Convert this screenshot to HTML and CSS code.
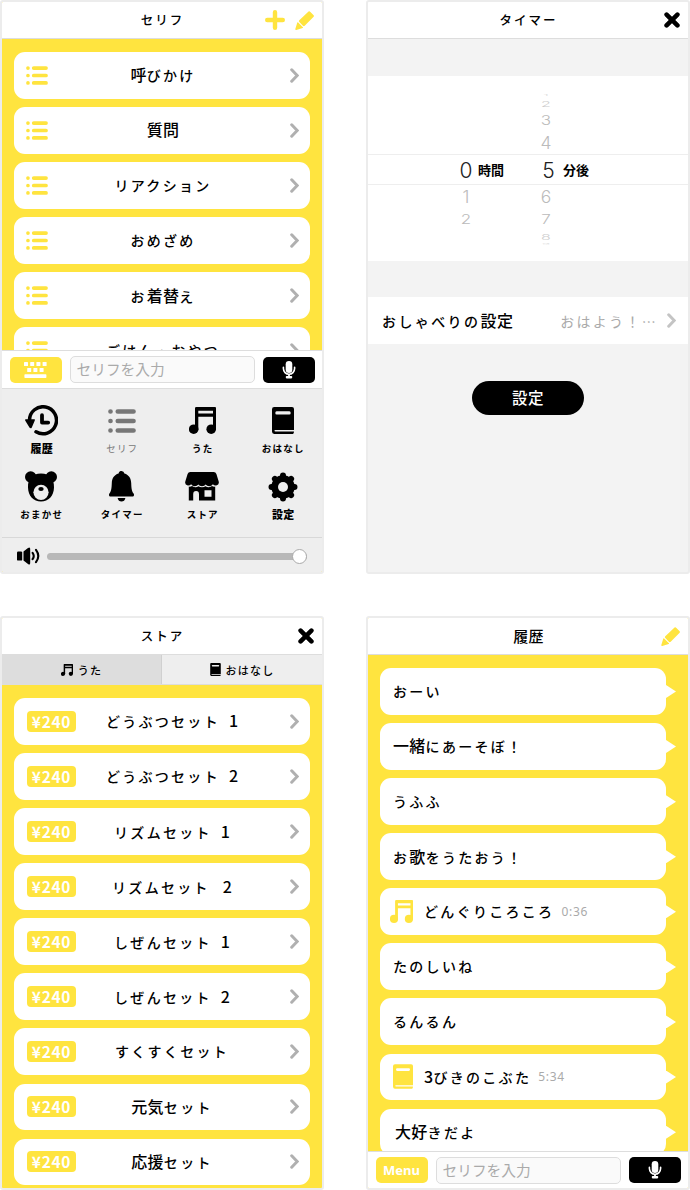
FILE: index.html
```html
<!DOCTYPE html>
<html lang="ja">
<head>
<meta charset="utf-8">
<title>おしゃべりアプリ</title>
<link rel="stylesheet" href="styles.css">
</head>
<body>
<svg class="defs" aria-hidden="true">
  <symbol id="list" viewBox="0 0 28 24"><g fill="none" stroke="currentColor" stroke-width="4.7" stroke-linecap="round"><path d="M2.5 2.5h0M9.8 2.5h15.7M2.5 12h0M9.8 12h15.7M2.5 21.5h0M9.8 21.5h15.7"/></g></symbol>
  <symbol id="chev" viewBox="0 0 9 15"><path d="M1.7 1.8 7.2 7.5 1.7 13.2" fill="none" stroke="currentColor" stroke-width="3" stroke-linecap="round"/></symbol>
  <symbol id="note" viewBox="0 0 27 27"><g fill="currentColor"><path d="M7.3 0H26q1 0 1 1v21.5h-3V9.800H9.300v12.700H6V1.200Q6 0 7.300 0ZM9.300 3.700v2.700h14.700V3.700Z" fill-rule="evenodd"/><circle cx="4.700" cy="22.200" r="4.800"/><circle cx="22.200" cy="22.200" r="4.800"/></g></symbol>
  <symbol id="book" viewBox="0 0 22 27"><path fill="currentColor" fill-rule="evenodd" d="M2.2 0H20q2 0 2 2v21H3.4q-1 0-1 .8t1 .8H22q0 2.400-1.200 2.400H2.200Q0 27 0 24.600V2.200Q0 0 2.200 0ZM4.600 4.300q-1.300 0-1.300 1.600t1.300 1.600h12.800q1.300 0 1.300-1.600t-1.300-1.600Z"/></symbol>
  <symbol id="pencil" viewBox="0 0 19 19"><g fill="currentColor"><path d="M4.300 9.200 13 .9q1.200-1.200 2.400 0l3 3q1.100 1.100 0 2.200l-8.700 8.600q-.9.900-1.800 0L4.300 11q-.9-.9 0-1.800Z"/><path d="M2.300 11.500q.4-.5.900 0l4.700 4.700q.5.600-.2.800l-6.400 1.900q-1.200.2-1-1Z"/></g></symbol>
  <symbol id="close" viewBox="0 0 16 16"><path d="m2.600 2.600 10.800 10.800M13.400 2.600 2.600 13.400" stroke="#000" stroke-width="4.600" stroke-linecap="round"/></symbol>
  <symbol id="mic" viewBox="0 0 14 18"><rect x="3.700" y="0" width="6.600" height="12" rx="3.300" fill="#fff"/><path d="M1.400 6.200v1.400a5.600 5.600 0 0 0 11.200 0V6.200" fill="none" stroke="#fff" stroke-width="1.600" stroke-linecap="round"/><path d="M7 13v2.600" stroke="#fff" stroke-width="1.800"/><rect x="3.800" y="15" width="6.400" height="2.400" rx=".8" fill="#fff"/></symbol>
</svg>

<main class="screens">
  <section class="phone">
    <header class="bar"><h1 class="title">セリフ</h1>
      <div class="tools">
        <svg class="plus" viewBox="0 0 20 20"><path d="M10 2.200v15.600M2.200 10h15.600" stroke="currentColor" stroke-width="4.400" stroke-linecap="round"/></svg>
        <svg class="pencil"><use href="#pencil"/></svg>
      </div>
    </header>
    <div class="cards">
      <div class="card"><svg class="list"><use href="#list"/></svg><p class="label"><b>呼</b>びかけ</p><svg class="chev"><use href="#chev"/></svg></div>
      <div class="card"><svg class="list"><use href="#list"/></svg><p class="label"><b>質問</b></p><svg class="chev"><use href="#chev"/></svg></div>
      <div class="card"><svg class="list"><use href="#list"/></svg><p class="label">リアクション</p><svg class="chev"><use href="#chev"/></svg></div>
      <div class="card"><svg class="list"><use href="#list"/></svg><p class="label">おめざめ</p><svg class="chev"><use href="#chev"/></svg></div>
      <div class="card"><svg class="list"><use href="#list"/></svg><p class="label">お<b>着替</b>え</p><svg class="chev"><use href="#chev"/></svg></div>
      <div class="card"><svg class="list"><use href="#list"/></svg><p class="label">ごはん・おやつ</p><svg class="chev"><use href="#chev"/></svg></div>
    </div>
    <div class="entry">
      <span class="btn yellow"><svg class="keys" viewBox="0 0 23 16" fill="#fff"><rect x="0" y="0" width="4" height="4" rx=".6"/><rect x="6.200" y="0" width="4" height="4" rx=".6"/><rect x="12.400" y="0" width="4" height="4" rx=".6"/><rect x="18.600" y="0" width="4" height="4" rx=".6"/><rect x="3.200" y="6" width="4" height="4" rx=".6"/><rect x="9.400" y="6" width="4" height="4" rx=".6"/><rect x="15.600" y="6" width="4" height="4" rx=".6"/><rect x=".4" y="12.200" width="22" height="3.800" rx=".7"/></svg></span>
      <span class="field">セリフを入力</span>
      <span class="btn black"><svg class="mic"><use href="#mic"/></svg></span>
    </div>
    <nav class="menu">
      <div class="item"><svg width="33" height="31" viewBox="0 0 33 31"><path d="M4.500 15A13.500 13.500 0 1 1 11 26.800" fill="none" stroke="#000" stroke-width="3.500" stroke-linecap="round"/><path d="M.7 14.200h8.600q1 .3.500 1.200l-3 7q-.9 1.500-2.200.4L.3 15.700q-.6-1.200.4-1.500Z"/><path d="M17 10.200v7.400h6.200" fill="none" stroke="#000" stroke-width="3.800" stroke-linecap="round" stroke-linejoin="round"/></svg><span class="cap"><b>履歴</b></span></div>
      <div class="item on"><svg width="28" height="24"><use href="#list"/></svg><span class="cap">セリフ</span></div>
      <div class="item"><svg width="27" height="27"><use href="#note"/></svg><span class="cap">うた</span></div>
      <div class="item"><svg width="22" height="27"><use href="#book"/></svg><span class="cap">おはなし</span></div>
      <div class="item"><svg width="32" height="31" viewBox="0 0 32 31"><circle cx="5.700" cy="6" r="5.700"/><circle cx="26.300" cy="6" r="5.700"/><path d="M16 2.600C25 2.600 29.300 8 29 16.500 28.800 25 23.500 30.500 16 30.500S3.200 25 3 16.500C2.700 8 7 2.600 16 2.600Z"/><circle cx="16" cy="21.300" r="7.600" fill="#eee"/><ellipse cx="16" cy="18.100" rx="2.700" ry="2"/></svg><span class="cap">おまかせ</span></div>
      <div class="item"><svg width="25" height="31" viewBox="0 0 25 31"><path d="M12.500 0q2.500 0 2.900 2.500c4.600 1.400 6.600 4.800 6.800 9.500.2 5.500.6 8.300 2.400 10.600.9 1.400.3 2.900-1.200 2.900H1.600C.1 25.500-.5 24 .4 22.600 2.200 20.300 2.600 17.500 2.800 12 3 7.300 5 3.900 9.600 2.500 10 0 12.500 0 12.500 0ZM8.600 27h7.800q-.8 3.600-3.900 3.600T8.600 27Z"/></svg><span class="cap">タイマー</span></div>
      <div class="item"><svg width="34" height="29" viewBox="0 0 34 29"><path d="M5.300 0h23.400q2 0 2.700 2l2.300 7.500q.8 3.500-2.500 3.900-2.300.1-3.300-1.200-1.200 2-3.700 2-2.300 0-3.500-1.800Q19.500 14.200 17 14.200t-3.700-1.800q-1.200 1.800-3.500 1.800-2.500 0-3.700-2-1 1.300-3.300 1.200Q-.5 13 .3 9.500L2.600 2Q3.300 0 5.300 0Z"/><path fill-rule="evenodd" d="M3.800 14.600q2 .2 3.200-.5 1.500 1.200 3.400 1.100 1.800 0 3-1 1.600 1 3.600 1t3.600-1q1.200 1 3 1 1.900.1 3.400-1.100 1.200.7 3.200.5V28.500H14v-6.300q0-3.300-2.900-3.300t-2.900 3.300v6.300H3.800Zm15.700 3.600v6.500h7v-6.500Z"/></svg><span class="cap">ストア</span></div>
      <div class="item"><svg width="30" height="30" viewBox="-15 -15 30 30"><circle r="11.700"/><path d="M0-11.500V11.500M-11.500 0H11.500M-8.100-8.100 8.100 8.100M8.100-8.100-8.100 8.100" stroke="#000" stroke-width="6" stroke-linecap="round"/><circle r="5" fill="#eee"/></svg><span class="cap"><b>設定</b></span></div>
    </nav>
    <div class="volume">
      <svg width="24" height="18" viewBox="0 0 24 18"><rect x="0" y="4.400" width="5.200" height="9.200" rx="1.200"/><path d="M6.500 4.600 11 1q2.200-1.400 2.200 1v14q0 2.400-2.200 1L6.500 13.400Z"/><path d="M15.600 5.800q2.300 3.200 0 6.400M19 2.800q4.600 6.200 0 12.400" fill="none" stroke="#000" stroke-width="2.100" stroke-linecap="round"/></svg>
      <div class="track"><i class="knob"></i></div>
    </div>
  </section>

  <section class="phone timer">
    <header class="bar"><h1 class="title">タイマー</h1><div class="tools"><svg class="close"><use href="#close"/></svg></div></header>
    <div class="spacer"></div>
    <div class="picker">
      <div class="wheel hours"><span></span><span></span><span></span><span></span><span class="now">0</span><span class="n1">1</span><span class="n2">2</span><span></span><span></span></div>
      <strong class="unit">時間</strong>
      <div class="wheel minutes"><span class="n4">1</span><span class="n3">2</span><span class="n2">3</span><span class="n1">4</span><span class="now">5</span><span class="n1">6</span><span class="n2">7</span><span class="n3">8</span><span class="n4">9</span></div>
      <strong class="unit">分後</strong>
    </div>
    <div class="spacer low"></div>
    <div class="setting"><p class="label">おしゃべりの<b>設定</b></p><p class="value">おはよう！…</p><svg class="chev"><use href="#chev"/></svg></div>
    <div class="action"><span class="submit">設定</span></div>
  </section>

  <section class="phone store">
    <header class="bar"><h1 class="title">ストア</h1><div class="tools"><svg class="close"><use href="#close"/></svg></div></header>
    <div class="tabs">
      <div class="tab active"><svg width="12" height="12"><use href="#note"/></svg><span>うた</span></div>
      <div class="tab"><svg width="11" height="13"><use href="#book"/></svg><span>おはなし</span></div>
    </div>
    <div class="cards">
      <div class="card"><span class="price">¥240</span><p class="label">どうぶつセット<i>1</i></p><svg class="chev"><use href="#chev"/></svg></div>
      <div class="card"><span class="price">¥240</span><p class="label">どうぶつセット<i>2</i></p><svg class="chev"><use href="#chev"/></svg></div>
      <div class="card"><span class="price">¥240</span><p class="label">リズムセット<i>1</i></p><svg class="chev"><use href="#chev"/></svg></div>
      <div class="card"><span class="price">¥240</span><p class="label">リズムセット<i class="wide">2</i></p><svg class="chev"><use href="#chev"/></svg></div>
      <div class="card"><span class="price">¥240</span><p class="label">しぜんセット<i>1</i></p><svg class="chev"><use href="#chev"/></svg></div>
      <div class="card"><span class="price">¥240</span><p class="label">しぜんセット<i>2</i></p><svg class="chev"><use href="#chev"/></svg></div>
      <div class="card"><span class="price">¥240</span><p class="label">すくすくセット</p><svg class="chev"><use href="#chev"/></svg></div>
      <div class="card"><span class="price">¥240</span><p class="label"><b>元気</b>セット</p><svg class="chev"><use href="#chev"/></svg></div>
      <div class="card"><span class="price">¥240</span><p class="label"><b>応援</b>セット</p><svg class="chev"><use href="#chev"/></svg></div>
    </div>
  </section>

  <section class="phone history">
    <header class="bar"><h1 class="title"><b>履歴</b></h1><div class="tools"><svg class="pencil"><use href="#pencil"/></svg></div></header>
    <div class="cards">
      <div class="card"><p class="label">おーい</p></div>
      <div class="card"><p class="label"><b>一緒</b>にあーそぼ！</p></div>
      <div class="card"><p class="label">うふふ</p></div>
      <div class="card"><p class="label">お<b>歌</b>をうたおう！</p></div>
      <div class="card media"><svg class="icon-note"><use href="#note"/></svg><p class="label">どんぐりころころ</p><time>0:36</time></div>
      <div class="card"><p class="label">たのしいね</p></div>
      <div class="card"><p class="label">るんるん</p></div>
      <div class="card media"><svg class="icon-book"><use href="#book"/></svg><p class="label"><b>3</b>びきのこぶた</p><time>5:34</time></div>
      <div class="card last"><p class="label"><b>大好</b>きだよ</p></div>
    </div>
    <div class="entry">
      <span class="btn yellow">Menu</span>
      <span class="field">セリフを入力</span>
      <span class="btn black"><svg class="mic"><use href="#mic"/></svg></span>
    </div>
  </section>
</main>
</body>
</html>
```

FILE: styles.css
```css
* { box-sizing: border-box; }
body {
  margin: 0;
  background: #fff;
  color: #000;
  font-family: "Noto Sans CJK JP", sans-serif;
}
h1, p { margin: 0; font-weight: 500; }
svg { display: block; flex: none; }
.defs { position: absolute; width: 0; height: 0; }

.screens {
  display: grid;
  grid-template-columns: 324px 324px;
  grid-template-rows: 574px 574px;
  gap: 42px;
}
.phone {
  display: flex;
  flex-direction: column;
  overflow: hidden;
  border: 2px solid #ececec;
  border-radius: 3px;
  background: #ffe43f;
}

/* header */
.bar {
  flex: none;
  display: grid;
  grid-template-columns: 60px 1fr 60px;
  align-items: center;
  height: 37px;
  background: #fff;
  border-bottom: 1px solid #ddd;
}
.title {
  grid-column: 2;
  text-align: center;
  font-size: 12.5px;
  line-height: 20px;
  letter-spacing: 2px;
  margin-right: -1px;
}
.title b { font-size: 15px; font-weight: 500; letter-spacing: .3px; }
.tools {
  display: flex;
  align-items: center;
  justify-content: flex-end;
  gap: 10px;
  padding-right: 8px;
  color: #ffe43f;
}
.plus { width: 20px; height: 20px; }
.pencil { width: 19px; height: 19px; }
.close { width: 16px; height: 16px; }

/* card lists */
.cards {
  flex: 1;
  min-height: 0;
  overflow: hidden;
  display: flex;
  flex-direction: column;
  gap: 8.4px;
  padding: 13px 12px 0;
}
.card {
  flex: none;
  display: grid;
  grid-template-columns: 48px 1fr 48px;
  align-items: center;
  height: 46.7px;
  border-radius: 11px;
  background: #fff;
}
.list { width: 22px; height: 19px; margin-left: 12px; color: #ffe43f; }
.chev { width: 9px; height: 15px; color: #b0b0b0; justify-self: end; margin-right: 11px; }
.label {
  text-align: center;
  white-space: nowrap;
  font-size: 14px;
  line-height: 24px;
  letter-spacing: 2.3px;
  margin: -1px -2px 0 0;
}
.label b { font-size: 16px; font-weight: 500; letter-spacing: .3px; }
.label i { font-style: normal; font-size: 16px; margin-left: 9px; letter-spacing: 0; }
.label i.wide { margin-left: 13px; }

/* text entry */
.entry {
  flex: none;
  display: flex;
  align-items: center;
  gap: 8px;
  height: 39px;
  padding: 0 7px 0 7.500px;
  background: #fff;
  border-top: 1px solid #ddd;
  border-bottom: 1px solid #ddd;
}
.btn {
  display: flex;
  align-items: center;
  justify-content: center;
  width: 52px;
  height: 26px;
  border-radius: 5px;
}
.btn.yellow {
  background: #ffe43f;
  color: #fff;
  font: bold 13px/26px "Noto Sans", sans-serif;
  letter-spacing: 0;
}
.btn.black { background: #000; }
.keys { width: 23px; height: 16px; }
.mic { width: 14px; height: 18px; }
.field {
  flex: 1;
  height: 27px;
  padding-left: 6px;
  border: 1.500px solid #ddd;
  border-radius: 5px;
  background: #fafafa;
  color: #aaa;
  font-size: 14.700px;
  line-height: 23px;
}

/* menu */
.menu {
  flex: none;
  display: grid;
  grid-template-columns: repeat(4, 80.500px);
  grid-auto-rows: 66px;
  height: 149px;
  padding-top: 13px;
  margin-left: -1px;
  background: #eee;
  border-bottom: 1px solid #d8d8d8;
}
.item {
  display: grid;
  grid-template-rows: 37px 18px;
  justify-items: center;
  align-items: center;
}
.item.on { color: #777; }
.cap {
  font-size: 9.500px;
  font-weight: 700;
  line-height: 16px;
  letter-spacing: 1.200px;
  margin-right: -1px;
}
.cap b { font-size: 11px; letter-spacing: .3px; }
.item.on .cap { font-weight: 400; }
.volume {
  flex: none;
  display: flex;
  align-items: center;
  gap: 6px;
  height: 34px;
  padding: 2px 15px 0 15px;
  background: #eee;
}
.track {
  flex: 1;
  display: flex;
  align-items: center;
  justify-content: flex-end;
  height: 7px;
  border-radius: 4px;
  background: #b8b8b8;
}
.knob {
  width: 15px;
  height: 15px;
  border: 1px solid #aaa;
  border-radius: 50%;
  background: #fff;
}

/* timer */
.timer { background: #f3f3f3; }
.spacer { flex: none; height: 37px; }
.spacer.low { height: 36px; }
.picker {
  flex: none;
  display: grid;
  grid-template-columns: 86px 24px 56px 28px 40px;
  align-items: start;
  height: 185px;
  background: linear-gradient(#eee, #eee) 0 78px / 100% 1px no-repeat, linear-gradient(#eee, #eee) 0 108px / 100% 1px no-repeat, #fff;
}
.wheel {
  display: grid;
  grid-template-rows: 4px 13px 20px 25px 30px 24px 21px 11px 6px;
  padding-top: 17px;
  width: 24px;
  color: #bbb;
  font: 300 19px/1 Inter, sans-serif;
}
.hours { grid-column: 2; }
.minutes { grid-column: 4; }
.wheel span { display: grid; place-items: center; height: 100%; min-height: 0; }
.wheel .now { color: #222; font-size: 21px; }
.minutes .now { padding-left: 5px; }
.wheel .n1 { font-size: 17.500px; transform: scaleY(.95); }
.wheel .n2 { transform: scaleY(.78); font-size: 17px; }
.wheel .n3 { transform: scaleY(.5); font-size: 16px; color: #ccc; }
.wheel .n4 { transform: scaleY(.15); font-size: 14px; color: #ddd; }
.unit { font-size: 13px; line-height: 20px; padding-top: 84px; white-space: nowrap; }
.minutes + .unit { padding-left: 1px; }
.setting {
  flex: none;
  display: flex;
  align-items: center;
  height: 47px;
  padding: 0 12px 0 14px;
  background: #fff;
}
.setting .label { margin: 0 auto 0 0; letter-spacing: 2.400px; }
.setting .label b { letter-spacing: .7px; }
.setting .value { font-size: 14px; letter-spacing: 2.300px; font-weight: 400; color: #aaa; margin-right: 9px; white-space: nowrap; }
.setting .chev { margin: 0; color: #c4c4c4; }
.action { display: flex; justify-content: center; padding-top: 37px; }
.submit {
  width: 112px;
  height: 34px;
  border-radius: 17px;
  background: #000;
  color: #fff;
  text-align: center;
  font-size: 15.500px;
  font-weight: 500;
  letter-spacing: .5px;
  line-height: 33px;
}

/* store */
.tabs {
  flex: none;
  display: grid;
  grid-template-columns: 1fr 1fr;
  height: 30px;
  border-bottom: 1px solid #ddd;
  background: #eee;
}
.tab {
  display: flex;
  align-items: center;
  justify-content: center;
  gap: 5px;
  font-size: 11px;
  font-weight: 500;
  letter-spacing: 1.200px;
}
.tab.active { background: #ddd; border-right: 1px solid #d0d0d0; }
.store .card { grid-template-columns: 66px 1fr 48px; }
.price {
  width: 49px;
  height: 21px;
  margin-left: 13px;
  border-radius: 4px;
  background: #ffe43f;
  color: #fff;
  text-align: center;
  font: bold 15.500px/20px "Noto Sans CJK JP", sans-serif;
  letter-spacing: .7px;
}

/* history */
.history .cards { padding-right: 22px; }
.history .card {
  position: relative;
  display: flex;
  padding-left: 13px;
}
.history .card::after {
  content: "";
  position: absolute;
  left: 100%;
  top: 17px;
  width: 10px;
  height: 13px;
  background: #fff;
  clip-path: polygon(0 0, 100% 50%, 0 100%);
}
.history .label { margin: -1px 0 0; }
.history .last { padding-left: 15px; }
.history .media { padding-left: 10px; color: #ffe43f; }
.history .media .label { color: #000; }
.icon-note { width: 23px; height: 23px; margin-right: 11px; }
.icon-book { width: 20px; height: 25px; margin: 0 11px 0 3px; }
time { color: #aaa; font: 12px/20px "Noto Sans", sans-serif; letter-spacing: .7px; margin-left: 7px; }
.history .entry { height: 37px; border-bottom: 0; }
```
